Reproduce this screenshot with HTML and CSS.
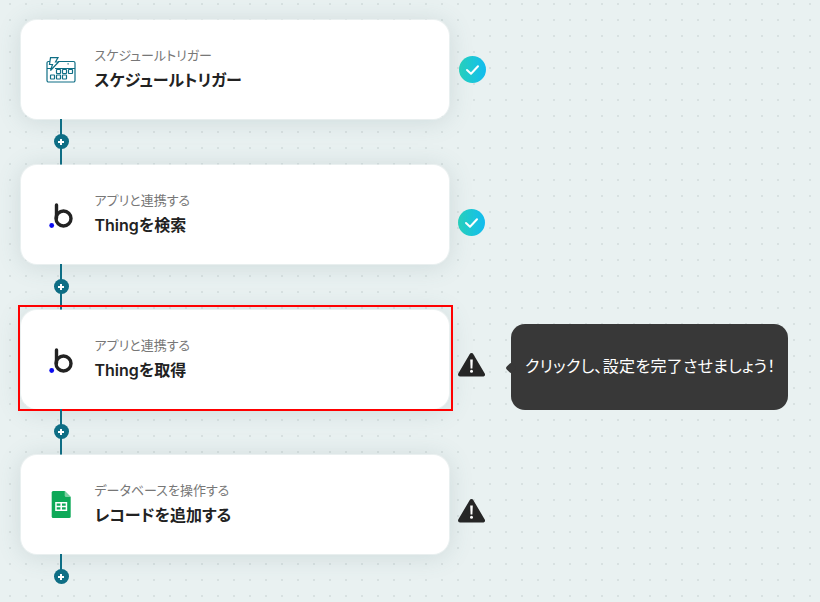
FILE: index.html
```html
<!DOCTYPE html>
<html lang="ja">

<head>
    <meta charset="UTF-8">
    <meta name="viewport" content="width=device-width, initial-scale=1.0">
    <title>フローボット</title>
    <link rel="stylesheet" href="styles.css">
</head>

<body>
    <main class="flow">
        <div class="step">
            <div class="card">
                <svg class="card-icon" width="30" height="26" viewBox="0 0 30 26" fill="none" stroke="#0e6e85" stroke-width="1.200">
                    <path d="M12 4.500H27.500a1.500 1.500 0 0 1 1.500 1.500V23.500a1.500 1.500 0 0 1-1.500 1.500H2.500a1.500 1.500 0 0 1-1.500-1.500V6A1.500 1.500 0 0 1 2.500 4.500H4" />
                    <path d="M1 11.500H5M9 11.500H29" />
                    <path d="M4.500 .6H12L9.500 5H12.500L4.500 13.500L6.500 7.500H3.500Z" fill="#fff" />
                    <path d="M21.500 6.800h1.200" />
                    <rect x="10.500" y="12.500" width="4" height="4" rx=".5" />
                    <rect x="16.500" y="12.500" width="4" height="4" rx=".5" />
                    <rect x="22.500" y="12.500" width="4" height="4" rx=".5" />
                    <rect x="4.500" y="18" width="4" height="4" rx=".5" />
                    <rect x="10.500" y="18" width="4" height="4" rx=".5" />
                    <rect x="16.500" y="18" width="4" height="4" rx=".5" />
                </svg>
                <div class="card-text">
                    <span class="card-label">スケジュールトリガー</span>
                    <strong class="card-title">スケジュールトリガー</strong>
                </div>
            </div>
            <svg class="status status-first" width="27" height="27" viewBox="0 0 27 27">
                <use href="#done" />
            </svg>
        </div>

        <div class="connector"><span class="plus"></span></div>

        <div class="step">
            <div class="card">
                <svg class="card-icon" width="30" height="26" viewBox="0 0 30 26">
                    <use href="#bubble" />
                </svg>
                <div class="card-text">
                    <span class="card-label">アプリと連携する</span>
                    <strong class="card-title">Thingを検索</strong>
                </div>
            </div>
            <svg class="status status-done" width="27" height="27" viewBox="0 0 27 27">
                <use href="#done" />
            </svg>
        </div>

        <div class="connector"><span class="plus"></span></div>

        <div class="step">
            <div class="card card-selected">
                <svg class="card-icon" width="30" height="26" viewBox="0 0 30 26">
                    <use href="#bubble" />
                </svg>
                <div class="card-text">
                    <span class="card-label">アプリと連携する</span>
                    <strong class="card-title">Thingを取得</strong>
                </div>
            </div>
            <svg class="status status-warn" width="27" height="25" viewBox="0 0 27 25">
                <use href="#warn" />
            </svg>
            <div class="tooltip">クリックし、設定を完了させましょう！</div>
        </div>

        <div class="connector"><span class="plus"></span></div>

        <div class="step">
            <div class="card">
                <svg class="card-icon" width="30" height="28" viewBox="0 0 30 28">
                    <path d="M7.200 0H18.700L24.700 6V25.500A1.500 1.500 0 0 1 23.200 27H7.200A1.500 1.500 0 0 1 5.700 25.500V1.500A1.500 1.500 0 0 1 7.200 0Z" fill="#0da958" />
                    <path d="M18.700 0L24.700 6H20.200A1.500 1.500 0 0 1 18.700 4.500Z" fill="#7fcfa3" />
                    <path d="M9.200 11H21.200V20H9.200ZM10.700 12.500V14.700H14.400V12.500ZM16 12.500V14.700H19.700V12.500ZM10.700 16.300V18.500H14.400V16.300ZM16 16.300V18.500H19.700V16.300Z" fill="#fff" fill-rule="evenodd" />
                </svg>
                <div class="card-text">
                    <span class="card-label">データベースを操作する</span>
                    <strong class="card-title">レコードを追加する</strong>
                </div>
            </div>
            <svg class="status status-warn status-last" width="27" height="25" viewBox="0 0 27 25">
                <use href="#warn" />
            </svg>
        </div>

        <div class="connector connector-end"><span class="plus"></span></div>
    </main>

    <!-- icons shared by the steps -->
    <svg class="icon-defs" width="0" height="0">
        <defs>
            <linearGradient id="doneFill" x1="0" x2="1" y1="0" y2="0">
                <stop offset="0" stop-color="#27d3bd" />
                <stop offset="1" stop-color="#12bbef" />
            </linearGradient>
            <symbol id="done" viewBox="0 0 27 27">
                <circle cx="13.500" cy="13.500" r="13.500" fill="url(#doneFill)" />
                <path d="M8 14l4 3.800 7-7.600" fill="none" stroke="#fff" stroke-width="2" stroke-linecap="round" stroke-linejoin="round" />
            </symbol>
            <symbol id="warn" viewBox="0 0 27 25">
                <path d="M13.500 3L25 22.500H2Z" fill="#262626" stroke="#262626" stroke-width="4" stroke-linejoin="round" />
                <path d="M12.200 7.500h2.600l-.4 9h-1.800Z" fill="#fff" />
                <circle cx="13.500" cy="19.300" r="1.500" fill="#fff" />
            </symbol>
            <symbol id="bubble" viewBox="0 0 30 26">
                <path d="M10.500 3V16" stroke="#222" stroke-width="3.400" stroke-linecap="round" />
                <circle cx="17.500" cy="16.500" r="7.500" fill="none" stroke="#222" stroke-width="3.400" />
                <circle cx="5.700" cy="23.500" r="2.400" fill="#0a0af0" />
            </symbol>
        </defs>
    </svg>
</body>

</html>
```

FILE: styles.css
```css
html, body {
    margin: 0;
    padding: 0;
    height: 100%;
    overflow: hidden;
}

body {
    font-family: Inter, "Noto Sans CJK JP", sans-serif;
    font-feature-settings: "palt";
    color: #222;
    background-color: #e9f1f1;
    background-image: radial-gradient(#d8e1e1 1px, transparent 1.2px);
    background-size: 16px 16px;
    background-position: 2px -4px;
}

.flow {
    display: flex;
    flex-direction: column;
    padding: 20px 0 0 21px;
}

.step {
    display: flex;
    align-items: flex-start;
    height: 99px;
}

.card {
    position: relative;
    display: flex;
    align-items: center;
    box-sizing: border-box;
    width: 428px;
    height: 99px;
    padding: 0 0 0 25px;
    background-color: #fff;
    border-radius: 16px;
    box-shadow: 0 0 0 1px rgba(255, 255, 255, 0.4), 0 2px 24px rgba(80, 110, 115, 0.18);
}

/* rouge autour de l'etape en cours */
.card-selected::after {
    content: "";
    position: absolute;
    top: -5px;
    right: -4px;
    bottom: -2px;
    left: -3px;
    border: 2px solid #f00;
}

.card-icon {
    flex: none;
    width: 30px;
    margin-right: 18.5px;
}

.card-text {
    display: flex;
    flex-direction: column;
    gap: 5px;
    padding-bottom: 2px;
}

.card-label {
    font-size: 13px;
    line-height: 18px;
    color: #777;
}

.card-title {
    font-size: 16px;
    line-height: 22px;
    font-weight: 600;
    color: #222;
}

.status {
    flex: none;
    margin-left: 9px;
}

.status-first {
    margin-top: 36px;
    margin-left: 10px;
}

.status-done {
    margin-top: 44px;
}

.status-warn {
    margin-top: 42px;
}

.status-last {
    margin-top: 43px;
}

.tooltip {
    position: relative;
    flex: none;
    display: flex;
    align-items: center;
    box-sizing: border-box;
    width: 277px;
    height: 86px;
    margin: 14px 0 0 26px;
    padding: 0 14px 5px;
    font-size: 16px;
    letter-spacing: 0.3px;
    white-space: nowrap;
    color: #fff;
    background-color: #383838;
    border-radius: 14px;
}

.tooltip::before {
    content: "";
    position: absolute;
    top: 40px;
    left: -4px;
    width: 8px;
    height: 8px;
    background-color: #383838;
    transform: rotate(45deg);
    border-radius: 2px;
}

.connector {
    position: relative;
    align-self: flex-start;
    width: 2px;
    height: 46px;
    margin-left: 39px;
    background-color: #0e6e85;
}

.connector-end {
    height: 25px;
}

.plus {
    position: absolute;
    top: 15px;
    left: -6.5px;
    width: 15px;
    height: 15px;
    border-radius: 50%;
    background:
        linear-gradient(#fff, #fff) center / 6px 2px no-repeat,
        linear-gradient(#fff, #fff) center / 2px 6px no-repeat,
        #0e6e85;
}

.icon-defs {
    position: absolute;
}
```
